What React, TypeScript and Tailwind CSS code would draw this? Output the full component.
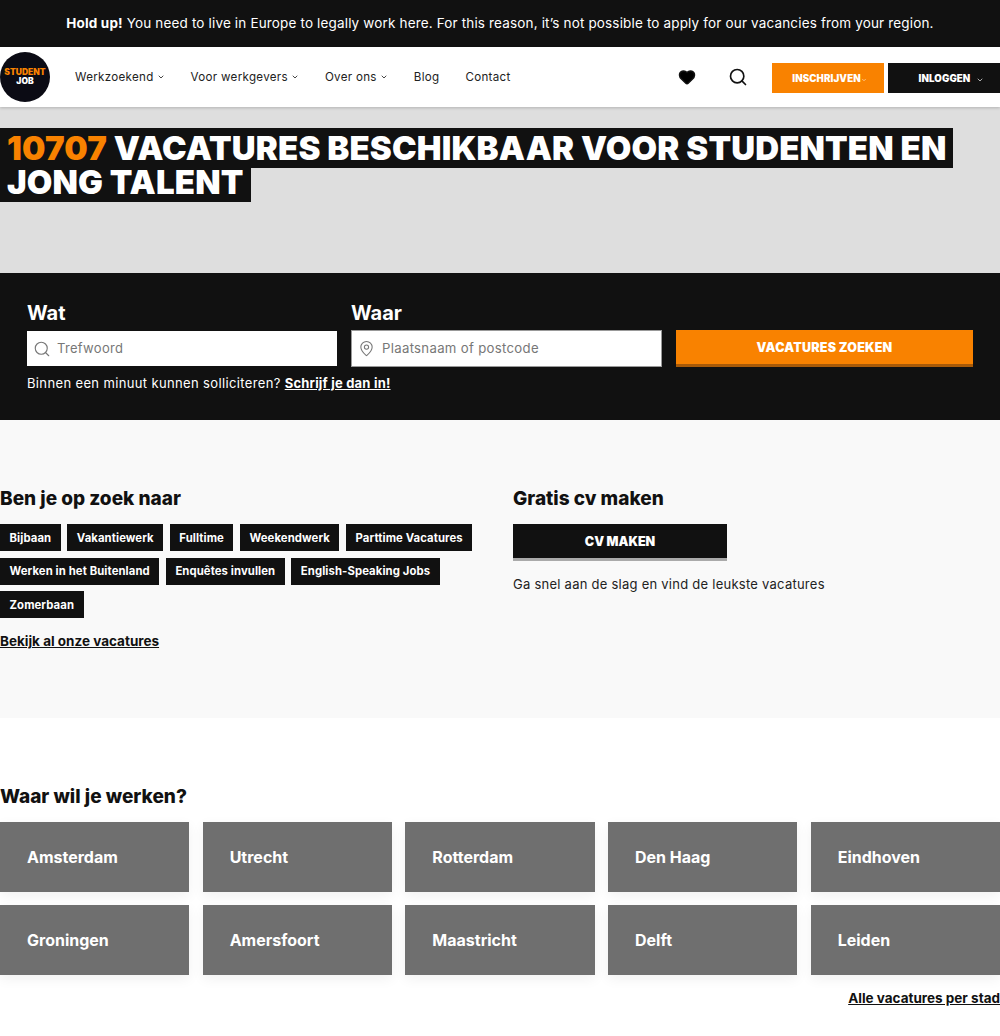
import { ChevronDown, Heart, MapPin, Search } from "lucide-react";

const FONT = "font-['Inter','Liberation_Sans',sans-serif]";

const tags = [
  "Bijbaan",
  "Vakantiewerk",
  "Fulltime",
  "Weekendwerk",
  "Parttime Vacatures",
  "Werken in het Buitenland",
  "Enquêtes invullen",
  "English-Speaking Jobs",
  "Zomerbaan",
];

const cities = [
  "Amsterdam",
  "Utrecht",
  "Rotterdam",
  "Den Haag",
  "Eindhoven",
  "Groningen",
  "Amersfoort",
  "Maastricht",
  "Delft",
  "Leiden",
];

function NavItem({ label, caret }: { label: string; caret?: boolean }) {
  return (
    <a className="flex items-center gap-[3px] pt-[1px] text-[11.6px] tracking-[0.3px] text-[#222]">
      {label}
      {caret ? <ChevronDown size={8} strokeWidth={2.5} /> : null}
    </a>
  );
}

export default function App() {
  return (
    <div className={`${FONT} h-[1036px] overflow-hidden bg-white text-[#111]`}>
      <div className="flex h-[47px] items-center justify-center bg-[#111] pb-[1px] text-[13.5px] tracking-[0.155px] text-white">
        <p>
          <strong className="font-bold">Hold up!</strong> You need to live in Europe to legally work here. For this
          reason, it’s not possible to apply for our vacancies from your region.
        </p>
      </div>

      <header className="relative z-10 flex h-[60px] items-center bg-white shadow-[0_1px_3px_rgba(0,0,0,0.2)]">
        <div className="flex h-[50px] w-[50px] shrink-0 flex-col items-center justify-center rounded-full bg-[#0b0b14] text-[8.5px] font-black leading-[9px]">
          <span className="text-[#f98200]">STUDENT</span>
          <span className="text-white">JOB</span>
        </div>
        <nav className="ml-[25px] flex items-center gap-[26px]">
          <NavItem label="Werkzoekend" caret />
          <NavItem label="Voor werkgevers" caret />
          <NavItem label="Over ons" caret />
          <NavItem label="Blog" />
          <NavItem label="Contact" />
        </nav>
        <div className="ml-auto flex items-center">
          <Heart size={18} fill="#000" strokeWidth={2} className="mr-[32px]" />
          <Search size={20} strokeWidth={2} className="mr-[24px]" />
          <a className="mt-[2px] flex h-[30px] w-[112px] items-center justify-center pt-[3px] pl-[3px] text-[9.7px] font-black tracking-[0.1px] text-white bg-[#f98200]">
            INSCHRIJVEN
            <ChevronDown size={6} strokeWidth={2} />
          </a>
          <a className="mt-[2px] ml-[4px] flex h-[30px] w-[112px] items-center justify-center gap-[6px] bg-[#111] pt-[3px] pl-[15px] text-[9.7px] font-black tracking-[0.1px] text-white">
            INLOGGEN
            <ChevronDown size={8} strokeWidth={2} />
          </a>
        </div>
      </header>

      <section className="h-[166px] bg-[#dedede] pt-[24px]">
        <h1 className="w-[960px] text-[33px] leading-[34px] font-black tracking-[0.15px] uppercase">
          <span className="bg-[#111] px-[7px] text-white [box-decoration-break:clone]">
            <span className="text-[#f98200]">10707</span> vacatures beschikbaar voor studenten en jong talent
          </span>
        </h1>
      </section>

      <section className="h-[147px] bg-[#111] px-[27px] pt-[27px] text-white">
        <div className="flex gap-[14px]">
          <div className="w-[310px]">
            <label className="block h-[31px] text-[20px] leading-[26px] font-bold">Wat</label>
            <div className="flex h-[35px] items-center gap-[6px] bg-white px-[6px] text-[13px] tracking-[0.3px] text-[#777]">
              <Search size={18} strokeWidth={1.5} />
              Trefwoord
            </div>
          </div>
          <div className="w-[311px]">
            <label className="block h-[31px] text-[20px] leading-[26px] font-bold">Waar</label>
            <div className="-mt-px flex h-[37px] items-center gap-[7px] border border-[#999] bg-white px-[6px] text-[13.2px] tracking-[0.3px] text-[#777]">
              <MapPin size={17} strokeWidth={1.5} />
              Plaatsnaam of postcode
            </div>
          </div>
          <button
            type="button"
            className="mt-[30px] h-[37px] w-[297px] border-b-[3px] border-b-[#a85a08] bg-[#f98200] pt-[2px] text-[12.5px] font-black tracking-[0.2px]"
          >
            VACATURES ZOEKEN
          </button>
        </div>
        <p className="mt-[7px] text-[13px] leading-[18px] tracking-[0.36px]">
          Binnen een minuut kunnen solliciteren? <a className="font-bold tracking-[0.2px] underline">Schrijf je dan in!</a>
        </p>
      </section>

      <section className="flex h-[298px] bg-[#f9f9f9] pt-[67px]">
        <div className="w-[513px]">
          <h2 className="text-[19px] leading-[24px] font-extrabold">Ben je op zoek naar</h2>
          <div className="mt-[13px] flex w-[490px] flex-wrap gap-[6.6px]">
            {tags.map((tag) => (
              <a
                key={tag}
                className="flex h-[27px] items-center bg-[#111] px-[9.5px] pt-[1px] text-[11.3px] font-bold tracking-[0.1px] text-white"
              >
                {tag}
              </a>
            ))}
          </div>
          <a className="mt-[15px] block text-[13.5px] leading-[16px] font-bold underline">Bekijk al onze vacatures</a>
        </div>
        <div>
          <h2 className="text-[19px] leading-[24px] font-extrabold">Gratis cv maken</h2>
          <a className="mt-[13px] flex h-[37px] w-[214px] items-center justify-center border-b-[3px] border-b-[#aaa] bg-[#111] pt-[2px] text-[12.5px] font-black text-white">
            CV MAKEN
          </a>
          <p className="mt-[14px] text-[13px] leading-[18px] tracking-[0.25px] text-[#222]">
            Ga snel aan de slag en vind de leukste vacatures
          </p>
        </div>
      </section>

      <section className="pt-[67px]">
        <h2 className="text-[19px] leading-[24px] font-extrabold">Waar wil je werken?</h2>
        <div className="mt-[13px] grid grid-cols-5 gap-[13.33px]">
          {cities.map((city) => (
            <a
              key={city}
              className="flex h-[70px] items-center bg-[#6f6f6f] pl-[27px] text-[16px] font-bold text-white shadow-[0_4px_12px_rgba(0,0,0,0.06)]"
            >
              {city}
            </a>
          ))}
        </div>
        <div className="mt-[10px] text-right">
          <a className="text-[13.5px] leading-[16px] font-bold underline">Alle vacatures per stad</a>
        </div>
      </section>
    </div>
  );
}
